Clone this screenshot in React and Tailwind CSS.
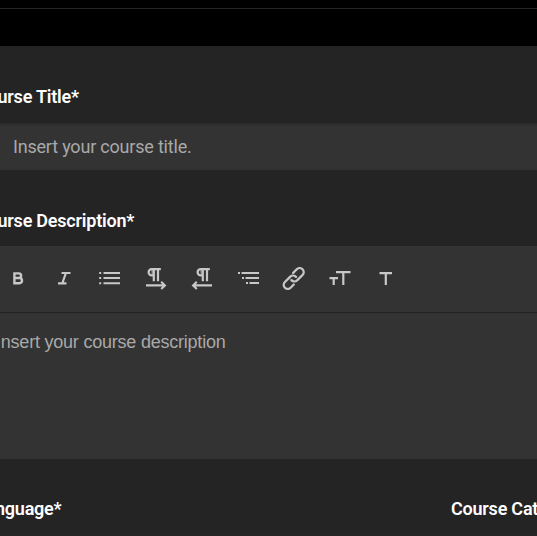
import React from "react";

const Icon = ({ children }) => (
  <span className="flex w-[46px] shrink-0 items-center justify-center">
    <svg width="24" height="24" viewBox="0 0 24 24" fill="none" stroke="#c8c8c8" strokeWidth="2">
      {children}
    </svg>
  </span>
);

const Label = ({ children }) => (
  <div className="whitespace-nowrap text-[18px] leading-[24px] font-semibold tracking-[-0.22px] text-white">{children}</div>
);

const Pilcrow = ({ x = 0 }) => (
  <g transform={`translate(${x} 0)`}>
    <path strokeWidth="2.2" d="M17.3 2.1H8.2a3.1 3.1 0 0 0 0 6.2h1.6M10.3 2.1v12.1M14.5 2.1v12.1" />
    <path fill="#c8c8c8" stroke="none" d="M7.6 3h2v4.4h-1.4z" opacity="0.55" />
  </g>
);

export default function App() {
  return (
    <div className="flex h-[536px] w-[537px] flex-col overflow-hidden bg-[#242424] font-['Roboto',sans-serif]">
      <div className="h-[46px] shrink-0 bg-black pt-2">
        <div className="h-px bg-[#242424]" />
      </div>
      <div className="-ml-[24px] mt-[39px] h-[38px] shrink-0">
        <Label>Course Title*</Label>
      </div>
      <div className="-mx-1 h-[47px] shrink-0 bg-[#333] pl-[17px] text-[18px] leading-[47px] tracking-[-0.2px] text-[#a9a9a9] shadow-[inset_0_1px_3px_rgba(0,0,0,0.25)]">
        Insert your course title.
      </div>
      <div className="-ml-[24px] mt-[39px] h-[37px] shrink-0">
        <Label>Course Description*</Label>
      </div>
      <div className="flex h-[213px] shrink-0 flex-col bg-[#333]">
        <div className="-ml-[5px] flex h-[67px] shrink-0 items-center border-b border-[#222]">
          <Icon>
            <path strokeWidth="2.4" d="M8.4 5.2v12M7.2 6.4h5.6a2.3 2.3 0 0 1 0 4.6H8.4h5a2.6 2.6 0 0 1 0 5.2H7.2" />
          </Icon>
          <Icon>
            <path strokeWidth="2.2" d="M9.5 6H18.5M6 16.4h8.5M13.9 6l-3.6 10.4" />
          </Icon>
          <Icon>
            <path d="M5.5 6H22M5.5 11h16.5M5.5 16.3h16.5" />
            <path d="M1.2 6h2M1.2 11h2M1.2 16.3h2" />
          </Icon>
          <Icon>
            <Pilcrow x={-0.5} />
            <path strokeWidth="2.1" d="M2 18.4h18.5M17.2 14.8l3.7 3.6-3.7 3.6" />
          </Icon>
          <Icon>
            <Pilcrow x={2.5} />
            <path strokeWidth="2.1" d="M22 18.4H3.5M6.8 14.8l-3.7 3.6 3.7 3.6" />
          </Icon>
          <Icon>
            <path d="M2 6h2M5.5 6H23M6 11h2M9.5 11H23M10 16h2M13.5 16H23" />
          </Icon>
          <Icon>
            <g transform="translate(-0.2 -0.5)" strokeWidth="2.3" strokeLinecap="round" strokeLinejoin="round">
              <path d="M9.6 13.6a4.1 4.1 0 0 0 5.7.3l5.4-5.4a4 4 0 0 0-5.7-5.7l-3.6 3.6" />
              <path d="M14.2 10.4a4.1 4.1 0 0 0-5.7-.3l-5.4 5.4a4 4 0 0 0 5.7 5.7l3.2-3.2" />
            </g>
          </Icon>
          <Icon>
            <path strokeWidth="2.2" d="M8 5.1h14.5M15.3 5v13M1.5 11.2H10M5.7 11v7" />
          </Icon>
          <Icon>
            <path strokeWidth="2.2" d="M5.5 6.1H18M11.8 6v12" />
          </Icon>
        </div>
        <div className="-ml-[4px] pt-[17px] whitespace-nowrap font-['Liberation_Sans',sans-serif] text-[18px] leading-6 tracking-[-0.22px] text-[#a9a9a9]">
          Insert your course description
        </div>
      </div>
      <div className="-ml-[24px] mt-[38px] flex shrink-0">
        <div className="w-[475px] shrink-0">
          <Label>Language*</Label>
        </div>
        <Label>Course Category*</Label>
      </div>
      <div className="mt-3 h-[3px] shrink-0 bg-[#272526]" />
    </div>
  );
}
